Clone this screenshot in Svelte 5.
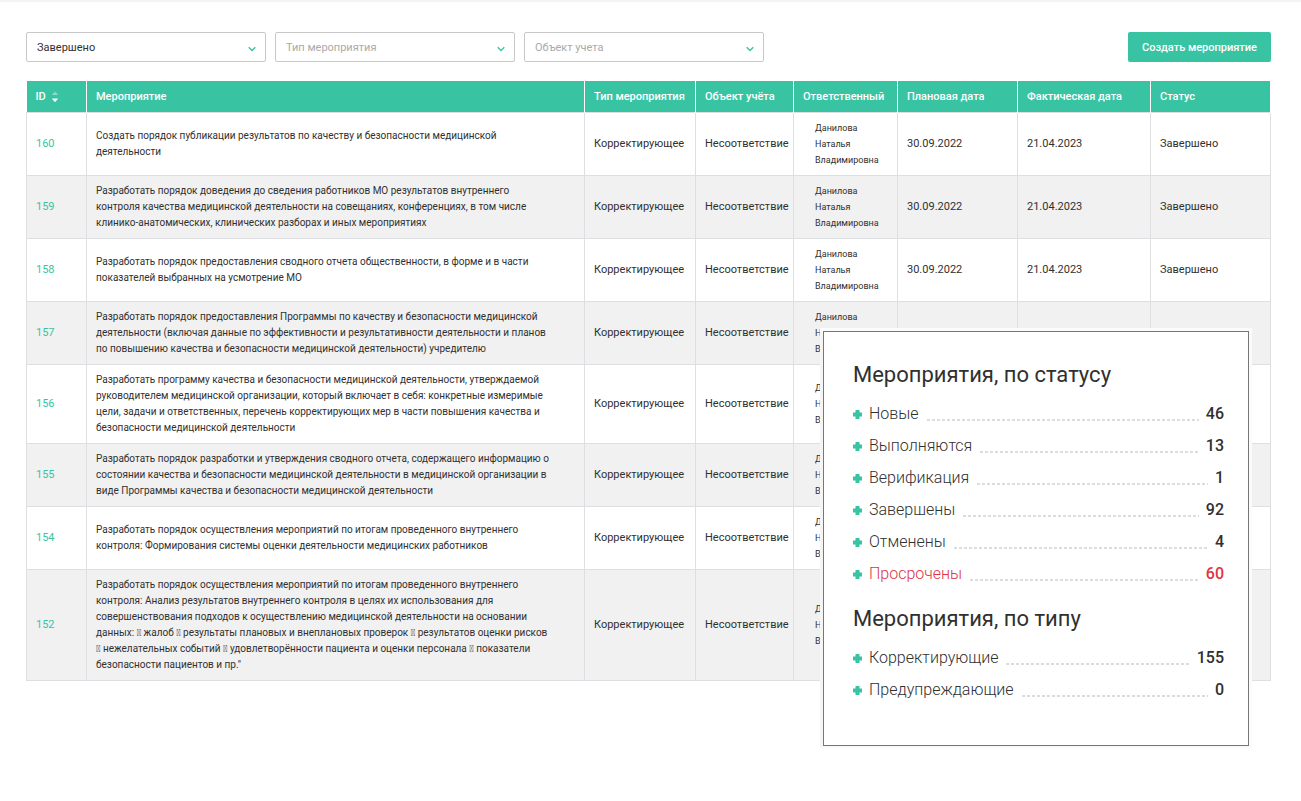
<script lang="ts">
  interface Filter {
    id: string;
    label: string;
    value: string;
    options: string[];
  }

  const filters: Filter[] = $state([
    { id: 'status', label: 'Статус', value: 'Завершено', options: ['Завершено'] },
    { id: 'type', label: 'Тип мероприятия', value: '', options: ['Корректирующее'] },
    { id: 'object', label: 'Объект учета', value: '', options: ['Несоответствие'] }
  ]);

  // \uf0b7 is the bullet left over from text pasted out of Word
  const rows = [
    { id: 160, title: 'Создать порядок публикации результатов по качеству и безопасности медицинской деятельности' },
    { id: 159, title: 'Разработать порядок доведения до сведения работников МО результатов внутреннего контроля качества медицинской деятельности на совещаниях, конференциях, в том числе клинико-анатомических, клинических разборах и иных мероприятиях' },
    { id: 158, title: 'Разработать порядок предоставления сводного отчета общественности, в форме и в части показателей выбранных на усмотрение МО' },
    { id: 157, title: 'Разработать порядок предоставления Программы по качеству и безопасности медицинской деятельности (включая данные по эффективности и результативности деятельности и планов по повышению качества и безопасности медицинской деятельности) учредителю' },
    { id: 156, title: 'Разработать программу качества и безопасности медицинской деятельности, утверждаемой руководителем медицинской организации, который включает в себя: конкретные измеримые цели, задачи и ответственных, перечень корректирующих мер в части повышения качества и безопасности медицинской деятельности' },
    { id: 155, title: 'Разработать порядок разработки и утверждения сводного отчета, содержащего информацию о состоянии качества и безопасности медицинской деятельности в медицинской организации в виде Программы качества и безопасности медицинской деятельности' },
    { id: 154, title: 'Разработать порядок осуществления мероприятий по итогам проведенного внутреннего контроля: Формирования системы оценки деятельности медицинских работников' },
    { id: 152, title: 'Разработать порядок осуществления мероприятий по итогам проведенного внутреннего контроля: Анализ результатов внутреннего контроля в целях их использования для совершенствования подходов к осуществлению медицинской деятельности на основании данных: \uf0b7 жалоб \uf0b7 результаты плановых и внеплановых проверок \uf0b7 результатов оценки рисков \uf0b7 нежелательных событий \uf0b7 удовлетворённости пациента и оценки персонала \uf0b7 показатели безопасности пациентов и пр."' }
  ];

  const summary = [
    {
      title: 'Мероприятия, по статусу',
      items: [
        { name: 'Новые', count: 46 },
        { name: 'Выполняются', count: 13 },
        { name: 'Верификация', count: 1 },
        { name: 'Завершены', count: 92 },
        { name: 'Отменены', count: 4 },
        { name: 'Просрочены', count: 60, overdue: true }
      ]
    },
    {
      title: 'Мероприятия, по типу',
      items: [
        { name: 'Корректирующие', count: 155 },
        { name: 'Предупреждающие', count: 0 }
      ]
    }
  ];
</script>

<div class="page">
  <div class="toolbar">
    {#each filters as filter (filter.id)}
      <div class="filter">
        <select id={filter.id} aria-label={filter.label} class:empty={!filter.value} bind:value={filter.value}>
          {#if filter.id !== 'status'}
            <option value="">{filter.label}</option>
          {/if}
          {#each filter.options as option}
            <option value={option}>{option}</option>
          {/each}
        </select>
        <svg class="chevron" viewBox="0 0 8 6" width="8" height="6" fill="none" stroke="currentColor" stroke-width="1.4">
          <path d="M0.7 1.2 4 4.4 7.3 1.2" />
        </svg>
      </div>
    {/each}
    <button class="create" type="button">Создать мероприятие</button>
  </div>

  <table>
    <colgroup>
      <col class="c-id" />
      <col />
      <col class="c-type" />
      <col class="c-object" />
      <col class="c-person" />
      <col class="c-date" />
      <col class="c-fact" />
      <col class="c-date" />
    </colgroup>
    <thead>
      <tr>
        <th>
          ID
          <svg class="sort" viewBox="0 0 8 12" width="8" height="12" fill="#fff">
            <path d="M4 0.5 7.2 4H0.8z" opacity="0.4" />
            <path d="M4 11.2 7.2 7.6H0.8z" />
          </svg>
        </th>
        <th>Мероприятие</th>
        <th>Тип мероприятия</th>
        <th>Объект учёта</th>
        <th>Ответственный</th>
        <th>Плановая дата</th>
        <th>Фактическая дата</th>
        <th>Статус</th>
      </tr>
    </thead>
    <tbody>
      {#each rows as row (row.id)}
        <tr>
          <td><a href="#{row.id}">{row.id}</a></td>
          <td class="title">{row.title}</td>
          <td>Корректирующее</td>
          <td>Несоответствие</td>
          <td class="person">Данилова<br />Наталья<br />Владимировна</td>
          <td>30.09.2022</td>
          <td>21.04.2023</td>
          <td>Завершено</td>
        </tr>
      {/each}
    </tbody>
  </table>

  <aside class="summary">
    {#each summary as group}
      <h2>{group.title}</h2>
      <ul>
        {#each group.items as item}
          <li class:overdue={item.overdue}>
            <svg class="plus" viewBox="0 0 9 9" width="9" height="9" fill="#38c4a3">
              <path d="M2.5 0h4v2.5H9v4H6.5V9h-4V6.5H0v-4h2.5z" />
            </svg>
            <span class="name">{item.name}</span>
            <span class="dots"></span>
            <b>{item.count}</b>
          </li>
        {/each}
      </ul>
    {/each}
  </aside>
</div>

<style>
  :global(body) {
    margin: 0;
    background: #fff;
  }

  .page {
    position: relative;
    padding: 30px 30px 110px 26px;
    border-top: 2px solid #f3f3f3;
    font-family: Roboto, sans-serif;
    font-size: 11px;
    line-height: 16px;
    color: #303030;
  }

  .toolbar {
    display: flex;
    gap: 9px;
    margin-bottom: 19px;
  }

  .filter {
    position: relative;
    flex: 0 1 240px;
  }

  select {
    appearance: none;
    width: 100%;
    height: 30px;
    padding: 1px 28px 0 10px;
    border: 1px solid #c8c8c8;
    border-radius: 2px;
    background: #fff;
    color: #303030;
    font: inherit;
  }

  select.empty {
    color: #aaa;
  }

  .chevron {
    position: absolute;
    right: 10px;
    top: 14px;
    color: #38c4a3;
    pointer-events: none;
  }

  .create {
    height: 30px;
    margin-left: auto;
    padding: 1px 14px 0;
    border: none;
    border-radius: 2px;
    background: #38c4a3;
    color: #fff;
    font: inherit;
    font-weight: 500;
    white-space: nowrap;
  }

  table {
    width: 100%;
    table-layout: fixed;
    border-collapse: collapse;
  }

  .c-id {
    width: 60px;
  }

  .c-type {
    width: 111px;
  }

  .c-object {
    width: 98px;
  }

  .c-person {
    width: 104px;
  }

  .c-date {
    width: 120px;
  }

  .c-fact {
    width: 133px;
  }

  th {
    padding: 8px 9px 7px;
    border-right: 1px solid #fff;
    background: #38c4a3;
    color: #fff;
    font-weight: 500;
    text-align: left;
    white-space: nowrap;
  }

  .sort {
    margin-left: 2px;
    vertical-align: -3px;
  }

  td {
    padding: 7px 9px;
    border: 1px solid #dddfe3;
  }

  tbody tr:nth-child(even) {
    background: #f1f1f1;
  }

  td a {
    color: #38c4a3;
    text-decoration: none;
  }

  .title {
    padding-right: 32px;
    font-size: 10px;
  }

  .person {
    padding-left: 21px;
    font-size: 9px;
  }

  .summary {
    position: absolute;
    top: 329px;
    right: 52px;
    box-sizing: border-box;
    width: 426px;
    padding: 28px 24px 25px 29px;
    border: 1px solid #777;
    background: #fff;
    box-shadow: -3px 1px #f5f5f5, 0 0 0 3px #fbfbfb;
  }

  h2 {
    margin: 0 0 8px;
    font-size: 22px;
    font-weight: 400;
    line-height: 30px;
  }

  ul {
    margin: 0 0 14px;
    padding: 0;
    list-style: none;
  }

  li {
    display: flex;
    align-items: center;
    gap: 7px;
    font-size: 16px;
    line-height: 32px;
  }

  .name {
    font-weight: 300;
  }

  .dots {
    flex: 1;
    height: 2px;
    margin: 12px 0 0 1px;
    background: repeating-linear-gradient(90deg, #dcdcdc 0 3px, transparent 3px 5px);
  }

  li b {
    font-weight: 500;
  }

  .overdue {
    color: #dc3545;
  }
</style>
